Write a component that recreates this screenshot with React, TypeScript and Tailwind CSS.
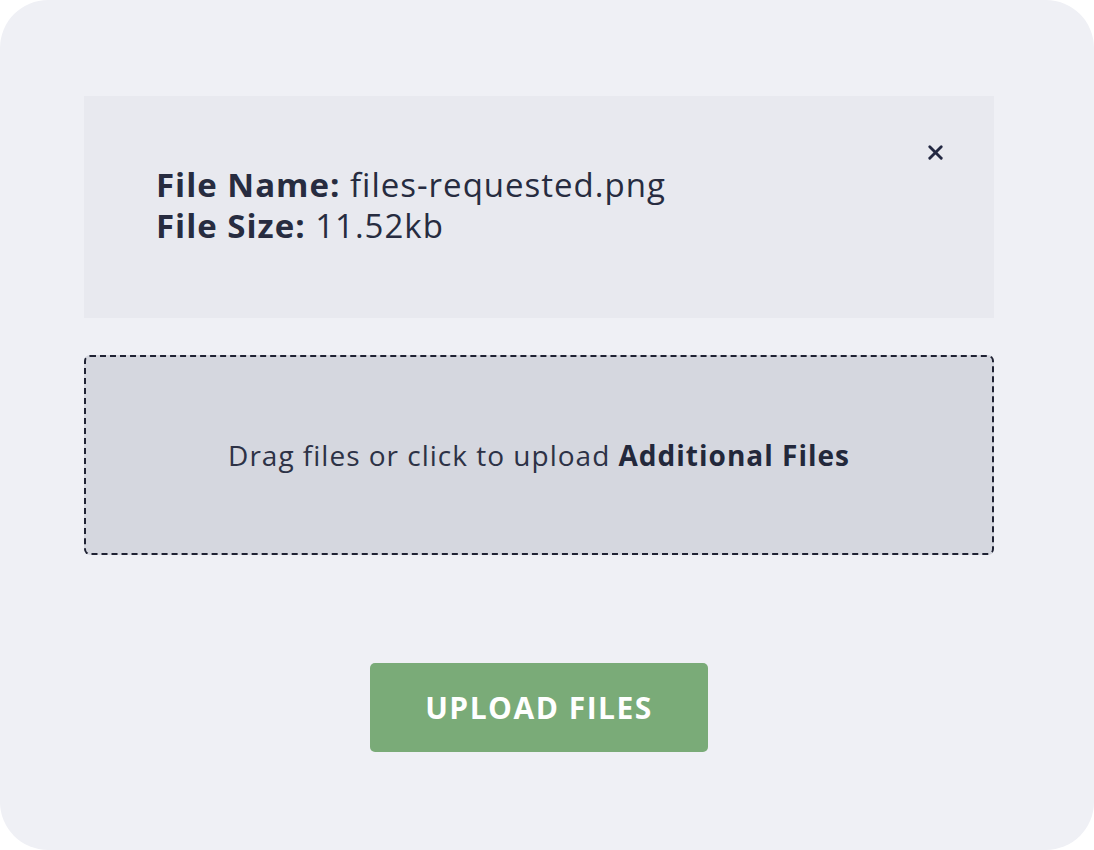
import React from "react";
import { X } from "lucide-react";

const files = [{ name: "files-requested.png", size: "11.52kb" }];

const App: React.FC = () => {
  return (
    <div className="w-[1094px] h-[850px] bg-white" style={{ fontFamily: '"Open Sans", "Lato", sans-serif' }}>
      <div className="w-full h-full rounded-[48px] bg-[#eff0f5] pl-[84px] pr-[100px] pt-[96px] flex flex-col">
        {/* Selected file */}
        {files.map((f) => (
          <div key={f.name} className="relative h-[222px] bg-[#e8e9ef] pl-[72px] pt-[68px]">
            <div className="text-[33px] leading-[41px] tracking-[1px] text-[#272c40]">
              <p>
                <span className="font-bold">File Name:</span> {f.name}
              </p>
              <p>
                <span className="font-bold">File Size:</span> {f.size}
              </p>
            </div>
            <button className="absolute right-[47px] top-[45px] text-[#232842]">
              <X size={23} strokeWidth={3} />
            </button>
          </div>
        ))}

        {/* Drop zone */}
        <div className="mt-[37px] h-[200px] rounded-[6px] border-2 border-dashed border-[#1f2233] bg-[#d5d7df] flex items-center justify-center">
          <p className="text-[28px] tracking-[1px] text-[#2d3246]">
            Drag files or click to upload <span className="font-bold text-[#23283b]">Additional Files</span>
          </p>
        </div>

        <div className="flex justify-center mt-[108px]">
          <button className="w-[338px] h-[89px] rounded-[5px] bg-[#7aab78] text-white text-[30px] font-bold tracking-[1.5px]">
            UPLOAD FILES
          </button>
        </div>
      </div>
    </div>
  );
};

export default App;
